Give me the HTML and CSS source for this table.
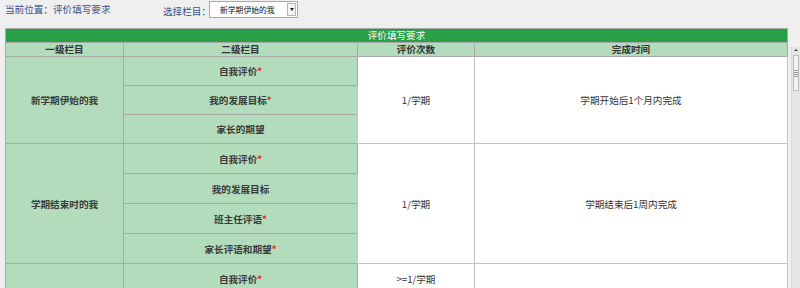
FILE: index.html
```html
<!DOCTYPE html>
<html lang="zh-CN">
<head>
<meta charset="utf-8">
<title>评价填写要求</title>
<link rel="stylesheet" href="styles.css">
</head>
<body>
<div class="frame">
  <div class="page">
    <div class="topbar">
      <div class="location">当前位置：评价填写要求</div>
      <div class="picker">
        <span class="picker-label">选择栏目：</span>
        <div class="select">
          <span class="select-text">新学期伊始的我</span>
          <span class="select-btn"><span class="tri"></span></span>
        </div>
      </div>
    </div>
    <table class="req">
      <colgroup>
        <col class="c1"><col class="c2"><col class="c3"><col class="c4">
      </colgroup>
      <tr class="title"><td colspan="4">评价填写要求</td></tr>
      <tr class="head"><th>一级栏目</th><th>二级栏目</th><th>评价次数</th><th>完成时间</th></tr>

      <tr class="g1"><td class="lv1" rowspan="3">新学期伊始的我</td><td class="lv2">自我评价<span class="star">*</span></td><td class="val" rowspan="3">1/学期</td><td class="val" rowspan="3">学期开始后1个月内完成</td></tr>
      <tr class="g1"><td class="lv2">我的发展目标<span class="star">*</span></td></tr>
      <tr class="g1"><td class="lv2">家长的期望</td></tr>

      <tr><td class="lv1" rowspan="4">学期结束时的我</td><td class="lv2">自我评价<span class="star">*</span></td><td class="val" rowspan="4">1/学期</td><td class="val" rowspan="4">学期结束后1周内完成</td></tr>
      <tr><td class="lv2">我的发展目标</td></tr>
      <tr><td class="lv2">班主任评语<span class="star">*</span></td></tr>
      <tr><td class="lv2">家长评语和期望<span class="star">*</span></td></tr>

      <tr><td class="lv1"></td><td class="lv2">自我评价<span class="star">*</span></td><td class="val">&gt;=1/学期</td><td class="val"></td></tr>
    </table>
  </div>
  <div class="scrollbar">
    <div class="sb-up"></div>
    <div class="sb-thumb"><span></span><span></span><span></span><span></span></div>
  </div>
</div>
</body>
</html>
```

FILE: styles.css
```css
html, body {
  margin: 0;
  padding: 0;
  height: 288px;
  overflow: hidden;
  background: #efefef;
  font-family: "Noto Sans CJK SC", "Liberation Sans", sans-serif;
  font-size: 9.6px;
  color: #333;
}

.frame {
  display: flex;
  height: 288px;
}

.page {
  width: 792px;
  padding-left: 5px;
  box-sizing: border-box;
}

.topbar {
  height: 28px;
  display: flex;
  align-items: flex-start;
  padding-top: 1px;
  box-sizing: border-box;
}

.location {
  color: #34508a;
  width: 158px;
  line-height: 15px;
  margin-top: 1px;
  white-space: nowrap;
}

.picker {
  display: flex;
  align-items: flex-start;
}

.picker-label {
  color: #34508a;
  width: 46px;
  line-height: 17px;
  margin-top: 2px;
  white-space: nowrap;
}

.select {
  width: 89px;
  height: 17px;
  background: #fff;
  border: 1px solid #a9a9a9;
  display: flex;
  align-items: center;
  justify-content: space-between;
  box-sizing: border-box;
  padding-left: 10px;
}

.select-text {
  font-size: 7.8px;
  color: #111;
  white-space: nowrap;
}

.select-btn {
  width: 9px;
  height: 13px;
  margin-right: 1px;
  border: 1px solid #b5b5b5;
  background: #f4f4f4;
  display: flex;
  align-items: center;
  justify-content: center;
  box-sizing: border-box;
}

.tri {
  width: 0;
  height: 0;
  border-left: 2px solid transparent;
  border-right: 2px solid transparent;
  border-top: 3px solid #222;
}

.req {
  border-collapse: collapse;
  width: 782px;
  table-layout: fixed;
  border: 1px solid #a6a6a6;
}

.c1 { width: 118px; }
.c2 { width: 234px; }
.c3 { width: 117px; }
.c4 { width: 313px; }

.req td, .req th {
  border: 1px solid #a9a9a9;
  text-align: center;
  vertical-align: middle;
  padding: 0;
}

.title td {
  background: #27a047;
  color: #fff;
  height: 13px;
  line-height: 13px;
  font-weight: normal;
}

.head th {
  background: #b3dcbc;
  height: 13px;
  line-height: 13px;
  font-weight: bold;
  color: #333;
}

.lv1, .lv2 {
  background: #b3dcbc;
  font-weight: bold;
  color: #3a3a3a;
}

.lv2 {
  height: 29px;
}

.g1 .lv2 {
  height: 28px;
}

.val {
  background: #fff;
  border-color: #c4c4c4 !important;
  color: #333;
}

.star {
  color: #e0231b;
}

.scrollbar {
  width: 8px;
  margin-top: 47px;
  background: #e6e6e6;
  border-left: 1px solid #dadada;
  display: flex;
  flex-direction: column;
  align-items: center;
}

.sb-up {
  margin-top: 2px;
  width: 0;
  height: 0;
  border-left: 2px solid transparent;
  border-right: 2px solid transparent;
  border-bottom: 2px solid #444;
}

.sb-thumb {
  margin-top: 4px;
  width: 6px;
  height: 36px;
  background: #f3f3f3;
  border: 1px solid #bdbdbd;
  box-sizing: border-box;
  display: flex;
  flex-direction: column;
  justify-content: center;
  align-items: center;
  gap: 1px;
}

.sb-thumb span {
  display: block;
  width: 4px;
  height: 1px;
  background: #9a9a9a;
}
```
